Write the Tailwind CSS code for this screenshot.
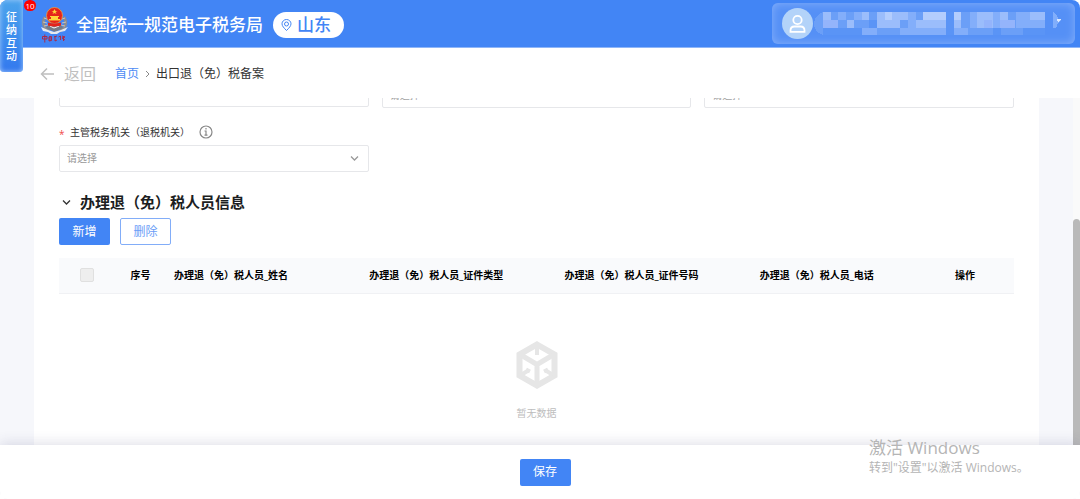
<!DOCTYPE html>
<html lang="zh-CN">
<head>
  <meta charset="UTF-8" />
  <meta name="viewport" content="width=device-width, initial-scale=1" />
  <title>出口退（免）税备案</title>
  <script src="https://cdn.jsdelivr.net/npm/@tailwindcss/browser@4"></script>
</head>
<body class="bg-white font-['Open_Sans','Noto_Sans_CJK_SC',sans-serif] text-[10px] text-[#333]">
  <div class="relative flex h-screen flex-col overflow-hidden rounded-lg bg-white">

    <header class="flex h-12 shrink-0 items-center justify-between border-b border-[#8fb6f8] bg-[#4285f5] pl-10 pr-[5px]">
      <div class="flex items-center pt-[2px]">
        <svg class="h-9 w-[29px]" viewBox="0 0 29 36" aria-label="中国税务">
          <path d="M5 10C2 15 3 21 9 24M24 10c3 5 2 11-4 14" fill="none" stroke="#8d8c91" stroke-width="3" />
          <path d="M4 11l3 1M3 15l4 1M4 19l4-1M25 11l-3 1M26 15l-4 1M25 19l-4-1" stroke="#c9c3b8" stroke-width="1" />
          <path d="M9 17h11l3 4-8 4-9-4z" fill="#777b85" />
          <path d="M1 20l7 3 6 2 7-2 7-3-3 4-5 1-3 2h-6l-3-2-5-1z" fill="#e6e9ef" />
          <path d="M10 19l4 2 5-2" fill="none" stroke="#fff" />
          <circle cx="14.500" cy="8.500" r="8" fill="#e5231b" stroke="#f5a03b" stroke-width=".8" />
          <path d="M14.500 2l1 2h2l-2 1 1 2-2-1-2 1 1-2-2-1h2zM10 9h9v1h-9zM9 12h11v1.500H9zM11 10h7v2h-7z" fill="#ffd43a" />
          <path d="M8 15.500q6 2 13 0v3q-7 2-13 0z" fill="#e5231b" />
          <path d="M2.500 29.500h4.500v2.500H2.500zM4.800 27.500v8M9 30l2.500-.5v4l-2.500.5zM10 29v5M14 30l3-1M15 29v5l2-1M18.500 30l2-1v4M22 29l3 1-3 1 3 2M23.500 31v3" fill="none" stroke="#b3233c" stroke-width=".9" />
        </svg>
        <h1 class="ml-[7px] text-[17px] leading-6 font-medium text-white">全国统一规范电子税务局</h1>
        <button class="ml-[10px] flex h-[26px] items-center rounded-full bg-white pl-2 pr-[13px] text-[17px] leading-6 font-medium text-[#4285f5]">
          <svg class="mr-[5px] h-3 w-[11px]" viewBox="0 0 11 12" fill="none" stroke="currentColor">
            <path d="M5.500 11.500C3 9 1 7 1 4.800a4.500 4.300 0 0 1 9 0C10 7 8 9 5.500 11.500z" />
            <circle cx="5.500" cy="5" r="2" />
          </svg>
          山东
        </button>
      </div>
      <button class="flex h-[41px] w-[303px] items-center rounded-md bg-[#5590f6] pl-[10px] shadow-[inset_0_0_10px_#86b0fa]" aria-label="用户">
        <svg class="h-[31px] w-[31px] shrink-0" viewBox="0 0 31 31">
          <circle cx="15.500" cy="15.500" r="15.500" fill="#b3d3f9" />
          <g fill="none" stroke="#fff" stroke-width="1.800">
            <circle cx="15.500" cy="12" r="4.200" />
            <path d="M8.500 23.800v-1.500q0-3.800 4-3.800h6q4 0 4 3.800v1.500z" />
          </g>
        </svg>
        <svg class="h-[23px] w-[250px]" viewBox="0 0 250 23" preserveAspectRatio="none" shape-rendering="crispEdges">
          <path d="M10 0H232V23H10Q1 20 1 11 2 3 10 0z" fill="#6b9ff7" />
          <g fill="#83aefa">
            <path d="M10 0h8v16h-8zM25 0h8v8h-8zM41 0h15v8H41zM95 0h8v16h-8zM157 0h30v16h-30zM203 0h15v16h-15zM218 8h14v8h-14zM49 16h15v7H49zM87 16h68v7H87z" />
          </g>
          <g fill="#9bbdfb">
            <path d="M10 0h8v8h-8zM49 0h7v8h-7zM64 0h15v16H64zM79 0h16v8H79zM110 0h15v8h-15zM125 0h8v8h-8zM141 0h7v16h-7zM164 0h16v16h-16zM187 0h8v8h-8zM217 0h15v8h-15zM34 8h7v8h-7zM79 8h8v8h-8zM103 8h30v8h-30z" />
          </g>
          <path d="M72 0h7v8h-7zM110 0h15v8h-15zM125 0h8v8h-8zM141 0h7v8h-7z" fill="#b3cdfd" />
          <path d="M10 8h15v8H10zM171 8h8v8h-8zM187 8h15v8h-15z" fill="#94b4fb" />
          <path d="M10 16h39v7H10zM56 8h8v8h-8zM133 0h8v23h-8zM180 16h8v7h-8zM210 16h22v7h-22z" fill="#5a94f6" />
          <path d="M240 0q5 3 5 8h3l-3 3-2 5h-3z" fill="#81aefb" />
          <path d="M244 7h4l-3 3z" fill="#dce9ff" />
        </svg>
      </button>
    </header>

    <nav class="flex h-[50px] shrink-0 items-center pt-[2px] pl-10 text-[12px] leading-5" aria-label="面包屑">
      <button class="flex items-center gap-[10px] text-[16px] leading-6 text-[#bfbfbf]">
        <svg class="h-[14px] w-[14px]" viewBox="0 0 14 14" fill="none" stroke="currentColor" stroke-width="1.500"><path d="M14 7H1.500M7 1.500L1.500 7 7 12.500" /></svg>
        返回
      </button>
      <a href="#" class="ml-[19px] text-[#4d8bf5]">首页</a>
      <svg class="mx-[5px] h-2 w-[7px]" viewBox="0 0 7 8" fill="none" stroke="#888"><path d="M2 1l3 3-3 3" /></svg>
      <span>出口退（免）税备案</span>
    </nav>

    <div class="flex min-h-0 flex-1">
      <main class="min-w-0 flex-1 overflow-hidden bg-[#f6f7fb] px-[34px]">
        <div class="flow-root h-full bg-white px-[25px]">
          <div class="-mt-[18px] grid grid-cols-3 gap-x-[13px]">
            <input aria-label="备案信息" class="h-[27px] rounded-xs border border-[#e6e7ea] px-[7px]" />
            <button class="mt-px h-[27px] rounded-xs border border-[#e6e7ea] px-[7px] text-left leading-5 text-[#a6a6a6]">请选择</button>
            <button class="mt-px h-[27px] rounded-xs border border-[#e6e7ea] px-[7px] text-left leading-5 text-[#a6a6a6]">请选择</button>

            <div class="mt-[14px]">
              <div class="flex h-5 items-center">
                <span class="w-[11px] pt-1 text-[#f04848]">*</span>
                <label for="authority" class="leading-5">主管税务机关（退税机关）</label>
                <svg class="ml-[9px] h-[14px] w-[14px]" viewBox="0 0 14 14" fill="none" stroke="#888" stroke-width="1.200">
                  <circle cx="7" cy="7" r="6" />
                  <path d="M7 3v1.500M5.500 6H7v4M5.500 10.200h3" />
                </svg>
              </div>
              <div class="relative mt-[3px]">
                <select id="authority" class="block h-[27px] w-full appearance-none rounded-xs border border-[#e6e7ea] bg-white px-[7px] text-[#999]">
                  <option>请选择</option>
                </select>
                <svg class="pointer-events-none absolute top-[10px] right-[10px] h-[7px] w-[9px]" viewBox="0 0 9 7" fill="none" stroke="#999" stroke-width="1.300"><path d="M1 1.500l3.500 3.500L8 1.500" /></svg>
              </div>
            </div>
          </div>

          <h2 class="mt-[18px] flex items-center text-[15px] leading-6 font-bold text-[#1c1e22]">
            <svg class="mr-[9px] ml-[3px] h-[7px] w-[9px]" viewBox="0 0 9 7" fill="none" stroke="#333" stroke-width="1.300"><path d="M1 1.500l3.500 3.500L8 1.500" /></svg>
            办理退（免）税人员信息
          </h2>
          <div class="mt-1 flex gap-[10px] text-[12px]">
            <button class="h-[27px] w-[51px] rounded-xs bg-[#4285f5] text-white">新增</button>
            <button class="h-[27px] w-[51px] rounded-xs border border-[#82adf8] text-[#6b9df7]">删除</button>
          </div>

          <table class="mt-[13px] w-full table-fixed text-left">
            <thead>
              <tr class="h-[35px] border-b border-[#f0f1f4] bg-[#f9fafc] text-black">
                <th class="w-[55px]">
                  <input type="checkbox" disabled aria-label="全选" class="mx-auto block h-[14px] w-[14px] appearance-none rounded-xs border border-[#e0e0e0] bg-[#eeeeee]" />
                </th>
                <th class="w-[53px] text-center">序号</th>
                <th class="px-[7px]">办理退（免）税人员_姓名</th>
                <th class="px-[7px]">办理退（免）税人员_证件类型</th>
                <th class="px-[7px]">办理退（免）税人员_证件号码</th>
                <th class="px-[7px]">办理退（免）税人员_电话</th>
                <th class="w-[66px] px-[7px]">操作</th>
              </tr>
            </thead>
          </table>

          <div class="flex flex-col items-center pt-[47px] text-[#bdbdbd]">
            <svg class="h-12 w-[42px]" viewBox="0 0 42 48" fill="none" stroke="#e6e6e6" stroke-width="5">
              <path d="M21 3.500L38.500 13.500v21L21 44.500 3.500 34.500v-21z" stroke-width="6" />
              <path d="M5 14l16 9.500L37 14M21 23v20" />
              <path d="M21 5v9M5 34l8-5M37 34l-8-5M10 28.500l4 2M32 28.500l-4 2" stroke-width="4" />
            </svg>
            <p class="mt-[14px] leading-5">暂无数据</p>
          </div>
        </div>
      </main>
      <div class="flex w-[7px] flex-col justify-end bg-[#fafafa]">
        <div class="h-[65%] rounded-t-full bg-[#b9b9b9]"></div>
      </div>
    </div>

    <footer class="relative flex h-[54px] shrink-0 items-center justify-center bg-white pl-[10px] shadow-[0_-2px_12px_rgba(60,60,110,0.16)]">
      <button class="h-[27px] w-[51px] rounded-xs bg-[#4285f5] text-[12px] text-white">保存</button>
    </footer>

    <aside class="absolute top-0 left-0 flex h-[72px] w-[23px] flex-col items-center rounded-b-sm bg-linear-to-b from-[#4ba3ec] to-[#3478ee] pt-[10px] text-[11px] leading-[13px] font-medium text-white shadow-[inset_0_0_5px_#a5ccfa]">
      <span>征</span><span>纳</span><span>互</span><span>动</span>
    </aside>
    <span class="absolute top-0 left-6 flex h-[11px] w-3 items-center justify-center rounded-full bg-[#fe0000] text-[8px] leading-none text-white">10</span>

    <div class="pointer-events-none absolute right-[45px] bottom-[21px] w-[166px] whitespace-nowrap text-[#b5b5b5]">
      <p class="text-[17px] leading-5">激活 Windows</p>
      <p class="text-[12px] leading-5">转到"设置"以激活 Windows。</p>
    </div>
  </div>
</body>
</html>
